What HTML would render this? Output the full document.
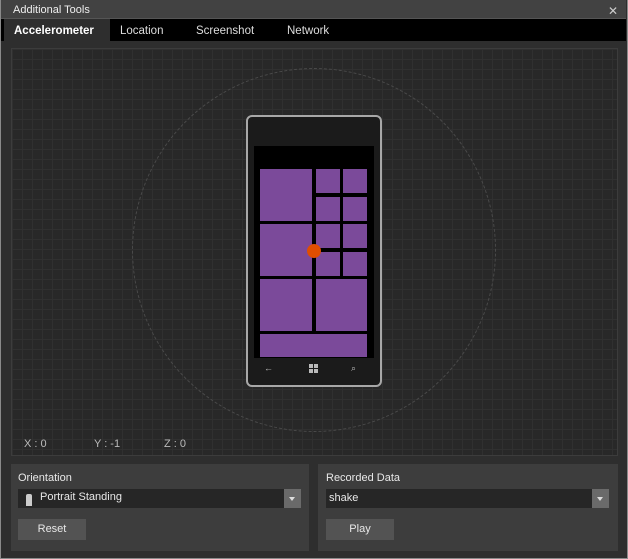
<!DOCTYPE html><html><head><style>
body{margin:0;width:628px;height:559px;background:#2e2e2e;font-family:"Liberation Sans",sans-serif;font-size:11px;color:#e8e8e8;position:relative;overflow:hidden}
div{position:absolute;box-sizing:border-box}
.tab{top:19px;height:22px;line-height:24px;font-size:11.5px;color:#ddd}
.panel{background:#3d3d3d;top:464px;height:87px}
.dd{background:#262626;height:19px;top:25px}
.arr{right:0;top:0;width:17px;height:19px;background:#6a6a6a}
.arr:after{content:"";position:absolute;left:5px;top:8px;border:3.5px solid transparent;border-top:4px solid #ddd}
.btn{background:#535353;top:55px;width:68px;height:21px;text-align:center;line-height:21px}
.t{background:#7b4a9a}
</style></head><body>
<div style="left:0;top:0;width:628px;height:559px;border:1px solid #8a8a8a;border-top:none"></div>
<div style="left:1px;top:0;width:625px;height:19px;background:#424242;border-bottom:1px solid #555;line-height:21px;padding-left:12px;color:#eee">Additional Tools</div>
<div style="left:608px;top:4px;color:#ccc;font-size:12px">✕</div>
<div style="left:1px;top:19px;width:625px;height:22px;background:#000"></div>
<div class="tab" style="left:4px;width:106px;background:#2e2e2e;padding-left:10px;color:#fff;font-weight:bold">Accelerometer</div>
<div class="tab" style="left:120px">Location</div>
<div class="tab" style="left:196px">Screenshot</div>
<div class="tab" style="left:287px">Network</div>
<div style="left:11px;top:48px;width:607px;height:408px;border:1px solid #3c3c3c;background-color:#282828;background-image:linear-gradient(#303030 1px,transparent 1px),linear-gradient(90deg,#303030 1px,transparent 1px);background-size:10px 10px"></div>
<div style="left:132px;top:68px;width:364px;height:364px;border-radius:50%;border:1px dashed #4a4a4a"></div>
<div style="left:246px;top:115px;width:136px;height:272px;border:2px solid #a8a8a8;border-radius:6px;background:#1b1b1b"></div>
<div style="left:254px;top:146px;width:120px;height:212px;background:#000"></div>
<div class="t" style="left:260px;top:169px;width:52px;height:52px"></div>
<div class="t" style="left:316px;top:169px;width:24px;height:24px"></div>
<div class="t" style="left:343px;top:169px;width:24px;height:24px"></div>
<div class="t" style="left:316px;top:197px;width:24px;height:24px"></div>
<div class="t" style="left:343px;top:197px;width:24px;height:24px"></div>
<div class="t" style="left:260px;top:224px;width:52px;height:52px"></div>
<div class="t" style="left:316px;top:224px;width:24px;height:24px"></div>
<div class="t" style="left:343px;top:224px;width:24px;height:24px"></div>
<div class="t" style="left:316px;top:252px;width:24px;height:24px"></div>
<div class="t" style="left:343px;top:252px;width:24px;height:24px"></div>
<div class="t" style="left:260px;top:279px;width:52px;height:52px"></div>
<div class="t" style="left:316px;top:279px;width:51px;height:52px"></div>
<div class="t" style="left:260px;top:334px;width:107px;height:23px"></div>
<div style="left:307px;top:244px;width:14px;height:14px;border-radius:50%;background:#e04e00"></div>
<div style="left:264px;top:363px;color:#bbb;font-size:9px">←</div>
<div style="left:309px;top:364px;width:9px;height:9px;background:linear-gradient(#1b1b1b,#1b1b1b) 4px 0/1px 9px no-repeat,linear-gradient(#1b1b1b,#1b1b1b) 0 4px/9px 1px no-repeat,#bbb"></div>
<div style="left:351px;top:363px;color:#bbb;font-size:9px">⌕</div>
<div style="left:24px;top:438px;color:#bbb">X : 0</div>
<div style="left:94px;top:438px;color:#bbb">Y : -1</div>
<div style="left:164px;top:438px;color:#bbb">Z : 0</div>
<div class="panel" style="left:11px;width:298px">
<div style="left:7px;top:8px">Orientation</div>
<div class="dd" style="left:7px;width:283px"><div style="left:8px;top:5px;width:6px;height:12px;background:#ccc;border-radius:2px 2px 0 0"></div><div style="left:22px;top:2px">Portrait Standing</div><div class="arr"></div></div>
<div class="btn" style="left:7px">Reset</div></div>
<div class="panel" style="left:318px;width:300px">
<div style="left:8px;top:8px">Recorded Data</div>
<div class="dd" style="left:8px;width:283px"><div style="left:3px;top:3px">shake</div><div class="arr"></div></div>
<div class="btn" style="left:8px">Play</div></div>
</body></html>
